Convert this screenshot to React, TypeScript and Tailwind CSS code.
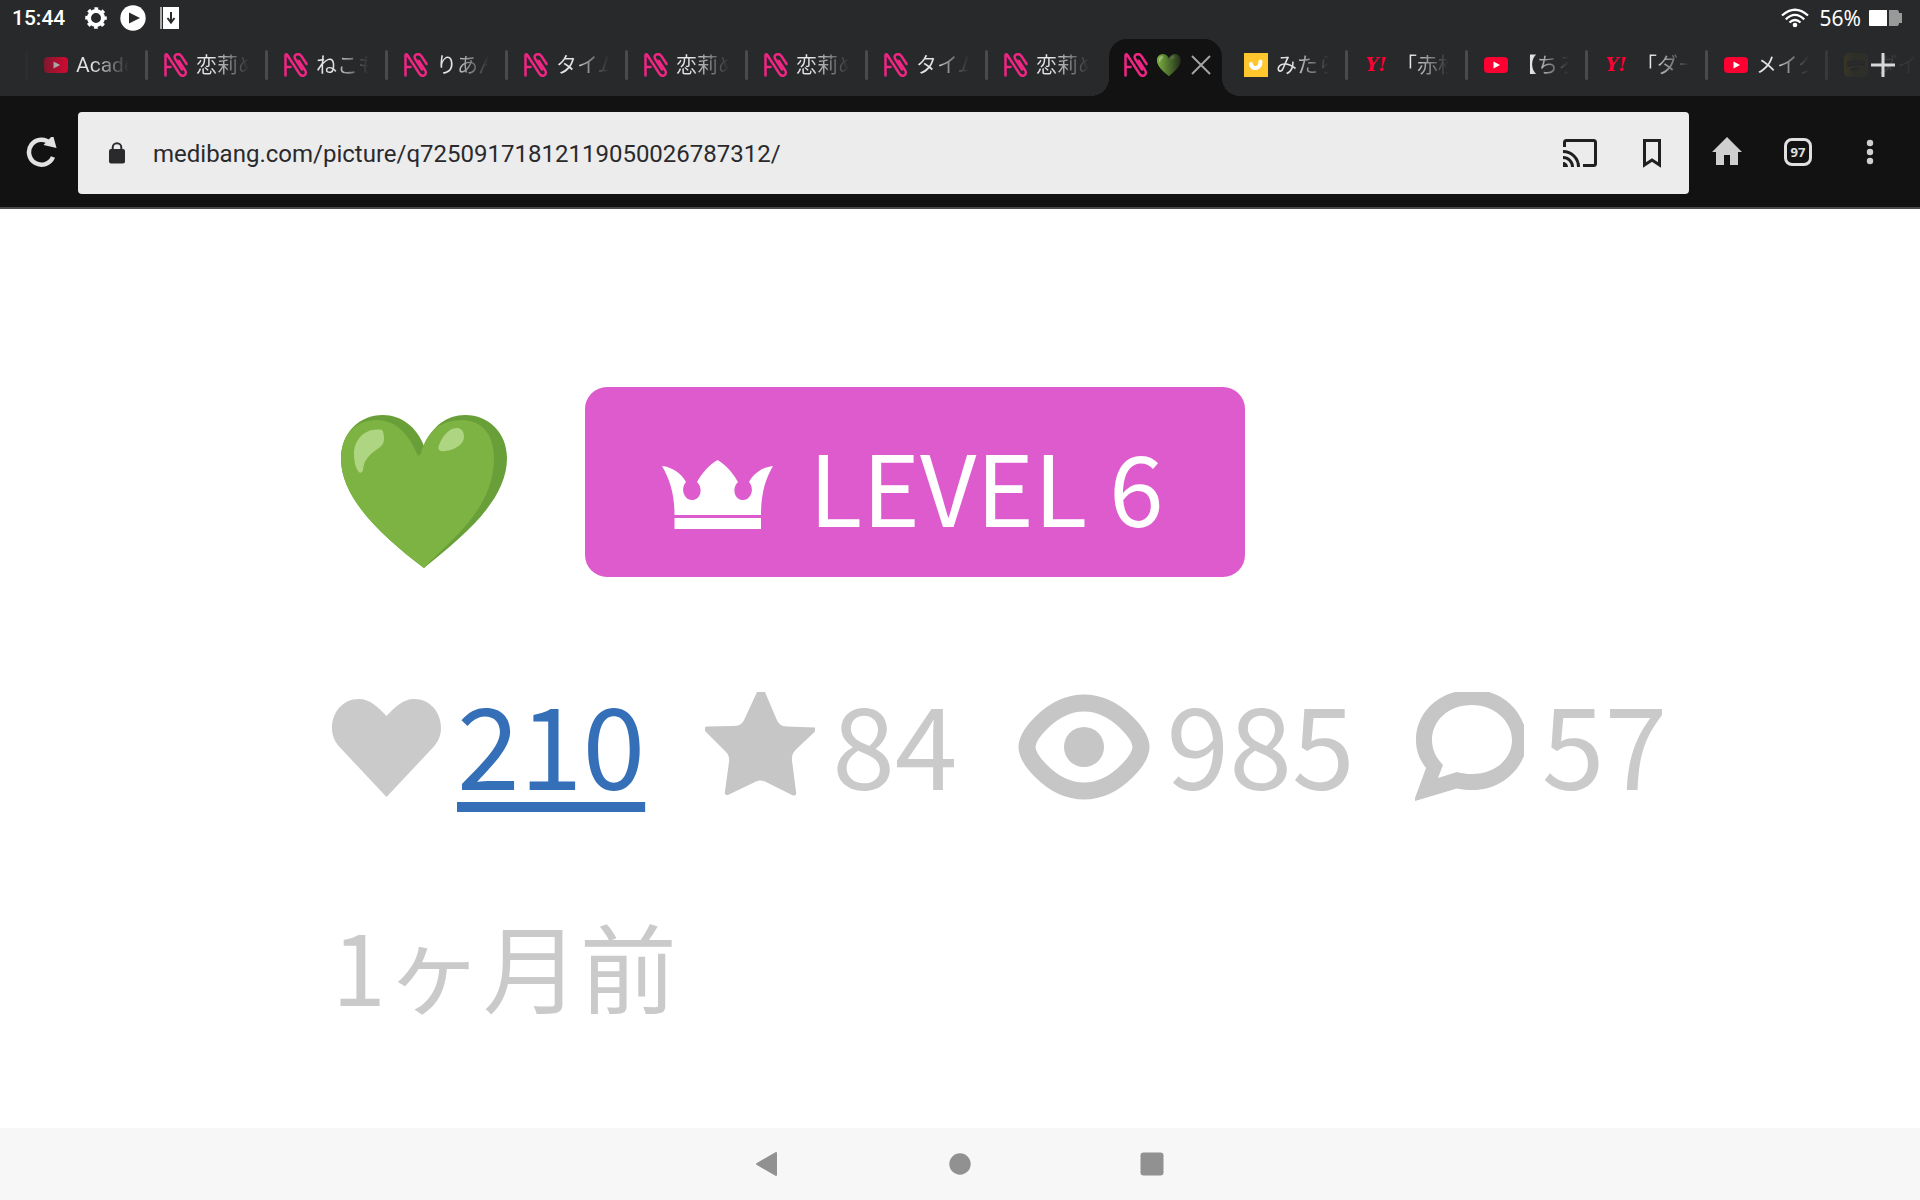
import type { ReactNode } from "react";

type TabIcon = "youtube" | "art" | "yahoo" | "smile" | "game";

type Tab = {
  icon: TabIcon;
  title: string;
  active?: boolean;
};

const tabs: Tab[] = [
  { icon: "youtube", title: "Acade" },
  { icon: "art", title: "恋莉め" },
  { icon: "art", title: "ねこも" },
  { icon: "art", title: "りあん" },
  { icon: "art", title: "タイム" },
  { icon: "art", title: "恋莉め" },
  { icon: "art", title: "恋莉め" },
  { icon: "art", title: "タイム" },
  { icon: "art", title: "恋莉め" },
  { icon: "art", title: "💚", active: true },
  { icon: "smile", title: "みたら" },
  { icon: "yahoo", title: "「赤松" },
  { icon: "youtube", title: "【ちろ" },
  { icon: "yahoo", title: "「ダー" },
  { icon: "youtube", title: "メイク" },
  { icon: "game", title: "ダイ" },
];

function GreenHeart({ className }: { className?: string }) {
  return (
    <svg viewBox="0 0 166 153" className={className} aria-hidden="true">
      <path
        fill="#689f38"
        d="M83 31C91 11 106 0 124 0c24 0 42 18 42 43 0 42-42 77-83 110C42 122 0 83 0 44 0 18 18 0 42 0c18 0 34 12 41 31z"
      />
      <path
        fill="#7cb342"
        d="M80 38C86 16 100 5 121 5c20 0 32 15 32 38 0 52-44 82-70 110C40 121 0 83 0 44 0 20 14 5 36 5c18 0 32 14 40 34 1 2 3 2 4-1z"
      />
      <path
        fill="#aed581"
        d="M41 15C25 12 13 24 13 39c0 8 2 14 4 17 2 3 4 2 5-1 1-10 6-15 13-20 5-3 8-6 8-11 0-5-1-8-2-9zM117 13c-9-1-16 9-19 17-2 5 1 7 6 6 10-1 19-7 19-14 0-5-2-8-6-9z"
      />
    </svg>
  );
}

function Favicon({ icon }: { icon: TabIcon }) {
  if (icon === "youtube") {
    return (
      <svg viewBox="0 0 24 24" className="size-6 shrink-0" aria-hidden="true">
        <rect y="4" width="24" height="16" rx="4" fill="#ff0033" />
        <path d="M9.5 8.5 16 12l-6.500 3.500z" fill="#fff" />
      </svg>
    );
  }
  if (icon === "art") {
    return (
      <svg
        viewBox="0 0 24 24"
        className="size-6 shrink-0"
        fill="none"
        stroke="#ee2683"
        strokeWidth="2.500"
        strokeLinecap="round"
        strokeLinejoin="round"
        aria-hidden="true"
      >
        <path d="M1.500 22.500V2.300C1.500 1 2.600 1 3.300 2L15.300 20.500c3 4.500 8.400 1.400 5.900-3L14.800 7.800" />
        <path d="M2 14H6.500M18 16.500 11.200 6C8.700 1.500 14.800-.5 17.300 3L22.600 11" />
      </svg>
    );
  }
  if (icon === "yahoo") {
    return (
      <span className="w-6 shrink-0 text-center font-['DejaVu_Serif',serif] text-lg leading-6 font-bold text-[#ff0033] italic">
        Y!
      </span>
    );
  }
  if (icon === "smile") {
    return (
      <svg viewBox="0 0 24 24" className="size-6 shrink-0" aria-hidden="true">
        <path d="M0 0h24v24H0z" fill="#ffc62e" />
        <path d="M7 11c.5 6 9.500 5.500 9.500-2.500" fill="none" stroke="#fff" strokeWidth="4" strokeLinecap="round" />
      </svg>
    );
  }
  return (
    <svg viewBox="0 0 24 24" className="size-6 shrink-0" aria-hidden="true">
      <rect width="24" height="24" rx="5" fill="#6e641c" />
      <path d="M3 10q9-3 18-1M3 13q9-3 18-1M7 17l8-2" stroke="#1c1c1c" strokeWidth="2" fill="none" />
    </svg>
  );
}

function BrowserTab({ tab, separator }: { tab: Tab; separator: boolean }) {
  if (tab.active) {
    return (
      <div className="relative mr-[3px] ml-1 flex h-full w-[113px] shrink-0 items-center rounded-t-[18px] bg-[#121212] pb-[5px] pl-[15px]">
        <span className="absolute bottom-0 -left-[18px] size-[18px] bg-[radial-gradient(circle_at_0_0,transparent_18px,#121212_18px)]" />
        <span className="absolute -right-[18px] bottom-0 size-[18px] bg-[radial-gradient(circle_at_100%_0,transparent_18px,#121212_18px)]" />
        <Favicon icon={tab.icon} />
        <span className="ml-[9px] mask-r-from-0% mask-r-to-120%">
          <GreenHeart className="h-[22px] w-6" />
        </span>
        <button type="button" aria-label="Close tab" className="ml-[10px]">
          <svg viewBox="0 0 20 20" className="size-5" stroke="#a3a3a3" strokeWidth="2" aria-hidden="true">
            <path d="M1 1 19 19M19 1 1 19" />
          </svg>
        </button>
      </div>
    );
  }
  return (
    <div className="flex h-full w-[120px] shrink-0 items-center pb-[5px]">
      <span className={separator ? "h-[30px] w-[3px] rounded-sm bg-[#4b4b4d]" : "w-[3px]"} />
      <button type="button" className="flex items-center pl-4">
        <Favicon icon={tab.icon} />
        <span className="ml-2 w-[53px] overflow-hidden bg-linear-to-r from-[#e4e4e4] from-30% to-transparent bg-clip-text text-left text-[21px] leading-8 whitespace-nowrap text-transparent">
          {tab.title}
        </span>
      </button>
    </div>
  );
}

function StatusBar() {
  return (
    <div className="flex h-9 items-center justify-between pr-[17px] pl-3 text-white">
      <div className="flex items-center">
        <span className="font-[Roboto] text-[21px] leading-9 font-medium">15:44</span>
        <svg viewBox="0 0 24 24" className="ml-[19px] size-6" aria-hidden="true">
          <circle cx="12" cy="12" r="7" fill="none" stroke="#fff" strokeWidth="4" />
          <circle cx="12" cy="12" r="9.300" fill="none" stroke="#fff" strokeWidth="3" strokeDasharray="3.650 3.650" strokeDashoffset="1.800" />
        </svg>
        <svg viewBox="0 0 26 26" className="ml-3 size-[26px]" aria-hidden="true">
          <circle cx="13" cy="13" r="12.700" fill="#fff" />
          <path d="m9 7.500 11 5.500L9 18.500z" fill="#28292b" />
        </svg>
        <svg viewBox="0 0 20 22" className="ml-[14px] h-[22px] w-5" aria-hidden="true">
          <path d="M0 0h2v22H0z" fill="#aaa" />
          <path d="M3 0h16v22H3z" fill="#fff" />
          <path d="M11 5v9M7.500 11l3.500 4.500 3.500-4.500" fill="none" stroke="#28292b" strokeWidth="2" />
        </svg>
      </div>
      <div className="flex items-center">
        <svg viewBox="0 0 28 20" className="h-5 w-7" fill="none" stroke="#fff" strokeWidth="2.300" aria-hidden="true">
          <path d="M1 7.500Q14-4 27 7.500M4.800 11.300Q14 2.500 23.200 11.300M8.500 14.500Q14 9.500 19.500 14.500" />
          <circle cx="14" cy="17" r="2.300" fill="#fff" stroke="none" />
        </svg>
        <span className="ml-[11px] font-['Noto_Sans'] text-[21px] leading-9">56%</span>
        <svg viewBox="0 0 34 16" className="ml-2 h-4 w-[34px]" aria-hidden="true">
          <path d="M20 0h8q2 0 2 3h3v10h-3q0 3-2 3h-8z" fill="#989a99" />
          <path d="M1 0h17v16H1q-1 0-1-1V1q0-1 1-1z" fill="#fff" />
        </svg>
      </div>
    </div>
  );
}

function Toolbar() {
  return (
    <div className="flex items-center border-b-2 border-[#4a4a4c] bg-[#121212] pt-4 pb-[13px]">
      <button type="button" aria-label="Reload" className="w-[78px] pl-[26px]">
        <svg viewBox="0 1 32 32" className="size-8" aria-hidden="true">
          <path d="M27 21A12.500 12.500 0 1 1 24.500 7.500" fill="none" stroke="#e2e2e2" strokeWidth="4.500" />
          <path d="M27 -1 30.500 12 17.500 9z" fill="#e2e2e2" />
        </svg>
      </button>
      <div className="flex h-[82px] grow items-center rounded bg-[#ececec] pr-7 pl-[31px]">
        <svg viewBox="0 0 16 22" className="h-[22px] w-4" aria-hidden="true">
          <rect y="7" width="16" height="14.500" rx="2" fill="#2a2a2c" />
          <path d="M3.700 8V5.500a4.300 4.300 0 0 1 8.600 0V8" fill="none" stroke="#2a2a2c" strokeWidth="2" />
        </svg>
        <input
          type="text"
          aria-label="Address"
          defaultValue="medibang.com/picture/q72509171812119050026787312/"
          className="ml-7 grow bg-transparent pt-[2px] font-[Roboto] text-[24px] leading-8 text-[#2a2a2c] outline-none"
        />
        <button type="button" aria-label="Cast">
          <svg viewBox="0 0 34 28" className="h-7 w-[34px]" fill="none" stroke="#202022" strokeWidth="3" aria-hidden="true">
            <path d="M1.500 8V3.500q0-2 2-2h27q2 0 2 2v21q0 2-2 2H20" />
            <path d="M0 12.500A15.500 15.500 0 0 1 15.500 28M0 18.500A9.500 9.500 0 0 1 9.500 28" />
            <path d="M0 23a5 5 0 0 1 5 5H0z" fill="#202022" stroke="none" />
          </svg>
        </button>
        <button type="button" aria-label="Bookmark" className="ml-[46px]">
          <svg viewBox="0 0 18 29" className="h-[29px] w-[18px]" fill="none" stroke="#202022" strokeWidth="3" aria-hidden="true">
            <path d="M1.500 1.500h15V26L9 21l-7.500 5z" />
          </svg>
        </button>
      </div>
      <button type="button" aria-label="Home" className="mb-1 ml-[23px]">
        <svg viewBox="0 0 30 28" className="h-7 w-[30px]" fill="#cfcfcf" aria-hidden="true">
          <path d="M15 0 30 15h-4v13h-8V18h-6v10H4V15H0z" />
        </svg>
      </button>
      <button
        type="button"
        aria-label="Open tabs"
        className="mb-[2px] ml-[42px] flex size-7 items-center justify-center rounded-lg border-[3px] border-[#e0e0e0] font-['Noto_Sans'] text-[13px] leading-none font-bold text-[#e0e0e0]"
      >
        97
      </button>
      <button type="button" aria-label="Menu" className="mr-[46px] mb-[2px] ml-[54px]">
        <svg viewBox="0 0 8 26" className="h-[26px] w-2" fill="#cfcfcf" aria-hidden="true">
          <circle cx="4" cy="4" r="3.200" />
          <circle cx="4" cy="13" r="3.200" />
          <circle cx="4" cy="22" r="3.200" />
        </svg>
      </button>
    </div>
  );
}

function Stat({ icon, children }: { icon: ReactNode; children: ReactNode }) {
  return (
    <div className="flex items-center gap-4">
      {icon}
      {children}
    </div>
  );
}

function Stats() {
  return (
    <div className="mt-[82px] flex gap-[60px] text-[113px] leading-[164px] text-[#cacaca]">
      <Stat
        icon={
          <svg viewBox="0 0 109 110" className="mt-3 h-[110px] w-[109px]" fill="#cacaca" aria-hidden="true">
            <path d="M54.500 24C46 15 38 7 27 7 11 7 0 20 0 36c0 8 3 14 8 19.500L54.500 105 101 55.500c5-5.500 8-11.500 8-19.500C109 20 98 7 82 7 71 7 63 15 54.500 24z" />
          </svg>
        }
      >
        <a href="#likes" className="text-[#356fb8] underline decoration-[10px] underline-offset-[12px]">
          210
        </a>
      </Stat>
      <Stat
        icon={
          <svg viewBox="10 0 111 110" className="mt-3 h-[110px] w-[111px]" fill="#c6c6c6" aria-hidden="true">
            <path d="M62 0h8l11 26c2 5 5 8.500 11 8.500l28 1v4l-19 18c-3 3-4.500 6-4 11l4 31c1 4-2 5-5 3L71 90c-4-2-7-2-11 0l-25 12c-3 2-6 1-5-3l4-29c.5-5-.5-8-4-11L11 40c-3-3-1-5.500 1-5.500l27-.5c6 0 9-3 11-8z" />
          </svg>
        }
      >
        <span>84</span>
      </Stat>
      <Stat
        icon={
          <svg viewBox="9 0 133 110" className="mt-3 h-[110px] w-[133px]" aria-hidden="true">
            <path
              d="M75 11C58 11 44 19 32 31 24 39 18 48 18 55s6 16 14 24c12 12 26 20 43 20s31-8 43-20c8-8 14-17 14-24s-6-16-14-24C106 19 92 11 75 11z"
              fill="none"
              stroke="#c6c6c6"
              strokeWidth="17"
            />
            <circle cx="75" cy="55" r="20" fill="#c6c6c6" />
          </svg>
        }
      >
        <span>985</span>
      </Stat>
      <Stat
        icon={
          <svg viewBox="0 0 111 110" className="mt-3 h-[110px] w-[111px]" aria-hidden="true">
            <path
              fill="#c6c6c6"
              fillRule="evenodd"
              d="M40 0h34c17 5 29 17 35 33v31c-9 22-30 34-51 34-6 0-11 0-16-1.500L0 109v-3l11-30C4 67 1 58 1 48 1 25 17 6 40 0zM57 13C33 13 17 29 17 48c0 9 4 18 11 25l-5 13 19-6c5 1.500 10 2 15 2 23 0 40-15 40-34S79 13 57 13z"
            />
          </svg>
        }
      >
        <span>57</span>
      </Stat>
    </div>
  );
}

function NavigationBar() {
  return (
    <nav className="flex h-[72px] items-center justify-center gap-[168px] bg-[#f7f7f7]">
      <button type="button" aria-label="Back">
        <svg viewBox="0 0 24 24" className="size-6" fill="#919191" stroke="#919191" strokeWidth="2" strokeLinejoin="round" aria-hidden="true">
          <path d="M1 12 20 1v22z" />
        </svg>
      </button>
      <button type="button" aria-label="Home screen">
        <svg viewBox="0 0 24 24" className="size-6" fill="#919191" aria-hidden="true">
          <circle cx="12" cy="12" r="10.700" />
        </svg>
      </button>
      <button type="button" aria-label="Recent apps">
        <svg viewBox="0 0 24 24" className="size-6" fill="#919191" aria-hidden="true">
          <rect x=".5" y=".5" width="23" height="23" rx="3" />
        </svg>
      </button>
    </nav>
  );
}

export default function App() {
  return (
    <div className="flex min-h-screen flex-col overflow-hidden bg-white font-['Noto_Sans_CJK_JP',sans-serif]">
      <header className="bg-[#28292b]">
        <StatusBar />
        <div className="relative mt-[3px] flex h-[57px] overflow-hidden pl-[25px] font-[Roboto,'Noto_Sans_CJK_JP',sans-serif]">
          {tabs.map((tab, i) => (
            <BrowserTab key={i} tab={tab} separator={!tabs[i - 1]?.active} />
          ))}
          <span className="absolute inset-y-0 left-0 w-20 bg-linear-to-r from-[#28292b] from-25% to-transparent" />
          <span className="absolute inset-y-0 right-0 w-24 bg-linear-to-r from-[#28292b]/50 to-[#28292b]/90 to-30%" />
          <button type="button" aria-label="New tab" className="absolute top-[13px] right-6">
            <svg viewBox="0 0 26 26" className="size-[26px]" stroke="#d8d8d8" strokeWidth="3" aria-hidden="true">
              <path d="M13 1v24M1 13h24" />
            </svg>
          </button>
        </div>
        <Toolbar />
      </header>
      <main className="grow pt-[178px] pl-[332px]">
        <div className="flex items-center">
          <GreenHeart className="mt-[18px] ml-[9px] h-[153px] w-[166px]" />
          <div className="ml-[78px] flex items-center rounded-[22px] bg-[#dd5bcd] pt-[26px] pr-[81px] pb-[22px] pl-[77px]">
            <svg viewBox="0 0 111 69" className="mt-5 h-[69px] w-[111px]" fill="#fff" aria-hidden="true">
              <path d="M0 6c10 1 19 7 24 16-6 7-2 18 6 18s12-11 5-18C40 13 47 5 55.500 0 64 5 71 13 76 22c-7 7-3 18 5 18s12-11 6-18C92 13 101 7 111 6c-8 14-12 28-12 49H12.500C12.500 34 8 20 0 6zM12.500 58H99v11H12.500z" />
            </svg>
            <span className="ml-9 text-[98px] leading-[142px] whitespace-nowrap text-white">LEVEL 6</span>
          </div>
        </div>
        <Stats />
        <time className="mt-[70px] block text-[97px] leading-[142px] text-[#cacaca]">1ヶ月前</time>
      </main>
      <NavigationBar />
    </div>
  );
}
